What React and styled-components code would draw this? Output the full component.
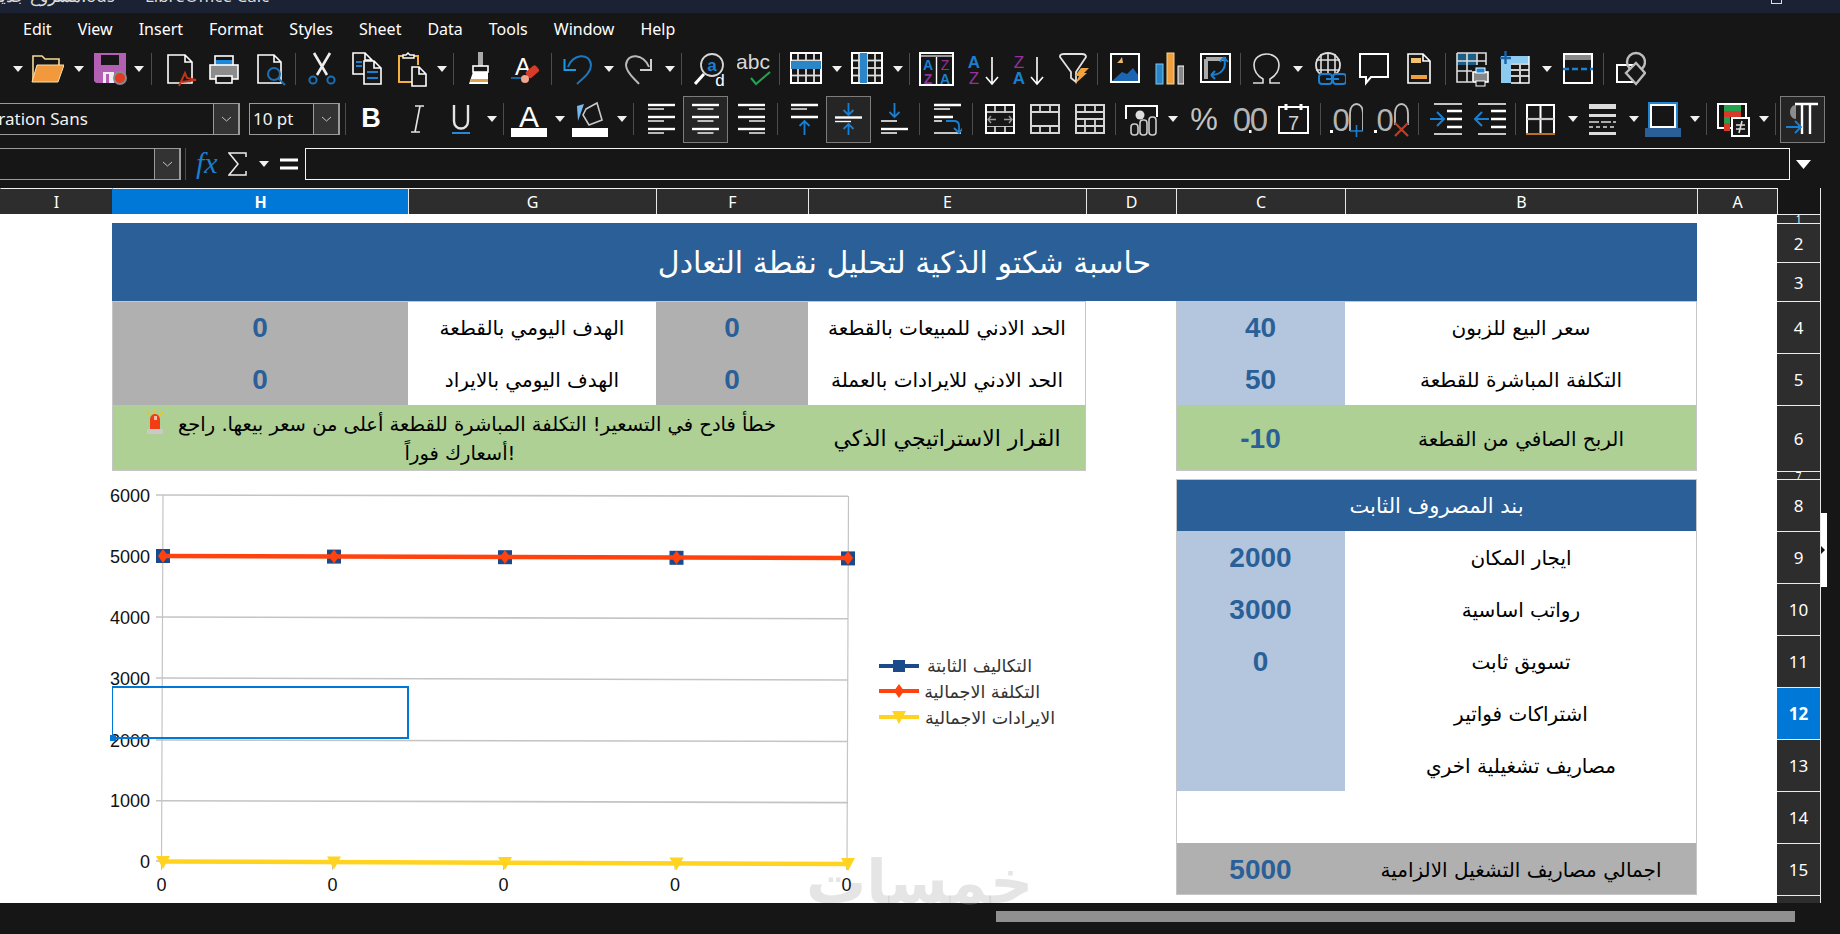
import React from 'react';
import styled, { createGlobalStyle } from 'styled-components';

const BLUE = '#2a5f98';
const ICON = '#1a7fd0';
const UI_FONT = '"Noto Sans", "Open Sans", sans-serif';
const AR_FONT = '"DejaVu Sans", sans-serif';

const Global = createGlobalStyle`
    html, body { margin: 0; padding: 0; background: #161616; }
    * { box-sizing: border-box; }
`;

const Page = styled.div`
    position: relative;
    width: 1840px;
    height: 934px;
    overflow: hidden;
    background: #161616;
    display: flex;
    flex-direction: column;
    font-family: ${UI_FONT};
`;

const TitleBar = styled.div`
    height: 13px;
    flex: none;
    overflow: hidden;
    background: #1a2233;
    color: #dcdcdc;
    display: flex;
    justify-content: space-between;
    font-size: 17px;
    line-height: 22px;
`;

const TitleText = styled.div`
    margin-top: -15px;
    margin-left: -8px;
    white-space: nowrap;
    display: flex;
    gap: 30px;
`;

const WinBtn = styled.div`
    width: 11px;
    height: 4px;
    margin-right: 58px;
    border: 1px solid #ddd;
    border-top: none;
`;

const MenuBar = styled.div`
    height: 32px;
    flex: none;
    display: flex;
    align-items: center;
    gap: 26px;
    padding-left: 23px;
    color: #fff;
    font-size: 16px;
`;

const Toolbar = styled.div`
    height: ${p => p.$h}px;
    flex: none;
    display: flex;
    align-items: center;
`;

const Tool = styled.div`
    flex: none;
    margin-left: ${p => p.$gap}px;
    width: ${p => p.$w}px;
    display: flex;
    justify-content: center;
    align-items: center;
    ${p => p.$on && `
        height: 47px;
        background: #252525;
        border: 1px solid #7c7c7c;
    `}
`;

const Sep = styled.div`
    width: 1px;
    height: 32px;
    background: #4c4c4c;
`;

const Caret = styled.div`
    width: 0;
    height: 0;
    border-left: 5px solid transparent;
    border-right: 5px solid transparent;
    border-top: 6px solid #f0f0f0;
`;

const Combo = styled.div`
    height: 32px;
    display: flex;
    width: 100%;
    border: 1px solid #9a9a9a;
    ${p => p.$noLeft && 'border-left: none;'}
    color: #f2f2f2;
    font-size: 17px;
    line-height: 30px;
    overflow: hidden;
`;

const ComboText = styled.div`
    flex: 1;
    min-width: 0;
    white-space: nowrap;
    padding-left: 3px;
    margin-left: ${p => p.$shift || 0}px;
`;

const ComboBtn = styled.div`
    flex: none;
    width: 26px;
    background: #333;
    border-left: 1px solid #9a9a9a;
    border-right: 1px solid #9a9a9a;
    display: flex;
    align-items: center;
    justify-content: center;
`;

const FormulaBar = styled.div`
    height: 43px;
    flex: none;
    display: flex;
    align-items: flex-start;
    padding-top: 3px;
`;

const FormulaField = styled.div`
    width: 1485px;
    height: 32px;
    margin-left: 7px;
    border: 1.5px solid #f4f4f4;
`;

const FormulaTool = styled.div`
    flex: none;
    height: 32px;
    display: flex;
    align-items: center;
    justify-content: center;
    margin-left: ${p => p.$gap}px;
    width: ${p => p.$w}px;
`;

const Body = styled.div`
    flex: none;
    display: flex;
    height: 715px;
`;

const Sheet = styled.div`
    width: 1820px;
    flex: none;
    background: #fff;
    display: grid;
    grid-template-columns: 112px 296px 248px 152px 278px 90px 169px 352px 80px 43px;
    grid-template-rows: 26px 9px 39px 39px 52px 52px 66px 8px repeat(8, 52px) 8px;
`;

const Rail = styled.div`
    position: relative;
    flex: 1;
    border-left: 1px solid #e8e8e8;
`;

const RailHandle = styled.div`
    position: absolute;
    left: 0;
    top: 325px;
    width: 6px;
    height: 74px;
    background: #fff;
    display: flex;
    align-items: center;
    &::after {
        content: '';
        border-left: 4px solid #111;
        border-top: 4px solid transparent;
        border-bottom: 4px solid transparent;
    }
`;

const ColHead = styled.div`
    background: ${p => (p.$on ? '#0078d7' : '#2d2d2d')};
    color: #fff;
    font-weight: ${p => (p.$on ? 700 : 400)};
    font-size: 16px;
    display: flex;
    align-items: center;
    justify-content: center;
    border-top: 1px solid #f2f2f2;
    border-left: 1px solid ${p => (p.$on || p.$first ? 'transparent' : '#e6e6e6')};
`;

const Corner = styled.div`
    background: #161616;
    border-left: 1px solid #e6e6e6;
`;

const RowHead = styled.div`
    grid-column: 10;
    background: ${p => (p.$on ? '#0078d7' : '#2d2d2d')};
    color: #fff;
    font-weight: ${p => (p.$on ? 700 : 400)};
    font-size: ${p => (p.$small ? 10 : 17)}px;
    line-height: 1;
    overflow: hidden;
    display: flex;
    align-items: center;
    justify-content: center;
    border-top: 1px solid #ececec;
`;

const Cell = styled.div`
    grid-column: ${p => p.$c};
    grid-row: ${p => p.$r};
    background: ${p => p.$bg || 'transparent'};
    display: flex;
    align-items: center;
    justify-content: center;
    min-width: 0;
`;

const Label = styled(Cell).attrs({ dir: 'rtl' })`
    font-family: ${AR_FONT};
    font-size: ${p => p.$size || 20}px;
    color: ${p => p.$color || '#000'};
    white-space: nowrap;
    padding-top: 1px;
`;

const Value = styled(Cell)`
    font-family: "Liberation Sans", Arial, sans-serif;
    font-weight: 700;
    font-size: 28px;
    color: ${BLUE};
    padding-top: 2px;
`;

const Notice = styled(Cell)`
    font-family: ${AR_FONT};
    font-size: 19.5px;
    line-height: 29px;
    color: #000;
    text-align: center;
    white-space: nowrap;
`;

const Frame = styled.div`
    grid-column: ${p => p.$c};
    grid-row: ${p => p.$r};
    border: 1px solid #c6c6c6;
    pointer-events: none;
    z-index: 1;
`;

const ChartArea = styled.svg`
    grid-column: 1 / 6;
    grid-row: 8 / 18;
    width: 1086px;
    height: 432px;
    z-index: 2;
    text {
        font-family: "Liberation Sans", Arial, sans-serif;
        font-size: 18px;
        fill: #111;
    }
    text.legend {
        font-family: ${AR_FONT};
        font-size: 17.5px;
        fill: #333;
    }
`;

const Selection = styled.div`
    grid-column: 2;
    grid-row: 13;
    position: relative;
    margin: -1px -1px 0 0;
    border: 2px solid #0078d7;
    border-width: 2px 2px 2px 1px;
    z-index: 3;
    &::after {
        content: '';
        position: absolute;
        left: -3px;
        bottom: -4px;
        width: 6px;
        height: 6px;
        background: #0078d7;
    }
`;

const Footer = styled.div`
    flex: 1;
    padding: 8px 45px 0 996px;
`;

const Thumb = styled.div`
    height: 11px;
    background: #909090;
`;

const Watermark = styled.div.attrs({ dir: 'rtl' })`
    position: absolute;
    left: 806px;
    top: 842px;
    font-family: ${AR_FONT};
    font-size: 60px;
    font-weight: 700;
    line-height: 80px;
    color: rgba(170, 170, 170, 0.3);
    z-index: 5;
`;

// every toolbar icon is drawn in a 36px tall box, coordinates in screen pixels
const S = ({ w, children }) => (
    <svg width={w} height={36} viewBox={`0 0 ${w} 36`} fill="none">{children}</svg>
);
const T = ({ x, y, size = 15, fill = '#fff', weight = 400, children }) => (
    <text x={x} y={y} fontSize={size} fontWeight={weight} fill={fill} fontFamily='"Liberation Sans", sans-serif' textAnchor="middle">{children}</text>
);

const Doc = ({ x = 1, y = 4, w = 24, h = 28, c = '#fff' }) => (
    <path d={`M${x} ${y}H${x + w - 7}L${x + w} ${y + 7}V${y + h}H${x}ZM${x + w - 7} ${y}V${y + 7}H${x + w}`} stroke={c} strokeWidth="1.6" fill="#171717" />
);

const GridIcon = ({ w = 32, h = 30, y = 2, cols = 4, rows = 4, c = '#ddd', children }) => {
    const lines = [];
    for (let i = 1; i < cols; i++) lines.push(<path key={'c' + i} d={`M${(w * i) / cols} ${y}V${y + h}`} stroke={c} strokeWidth="1.8" />);
    for (let i = 1; i < rows; i++) lines.push(<path key={'r' + i} d={`M1 ${y + (h * i) / rows}H${w - 1}`} stroke={c} strokeWidth="1.8" />);
    return (
        <S w={w}>
            {lines}
            <rect x="1" y={y} width={w - 2} height={h} stroke="#fff" strokeWidth="2" />
            {children}
        </S>
    );
};

const Folder = () => (
    <S w={33}>
        <path d="M2 30V5H11L14 8H28V15" stroke="#f7d994" strokeWidth="1.6" />
        <path d="M1 31L6 14H33L27 31Z" fill="#f2993d" stroke="#fbe3a8" />
    </S>
);
const Save = () => (
    <S w={34}>
        <path d="M1 2H33V24L26 32H3L1 30Z" fill="#b25fb4" />
        <rect x="8" y="4" width="18" height="10" fill="#171717" />
        <rect x="10" y="21" width="11" height="11" fill="#eee" />
        <rect x="13" y="23" width="3" height="9" fill="#b25fb4" />
        <circle cx="27" cy="27" r="6" fill="#e13b26" stroke="#8a8a8a" strokeWidth="2" />
    </S>
);
const Pdf = () => (
    <S w={30}>
        <Doc x={1} y={4} w={24} h={28} />
        <path d="M12 35L18 22L20 27L29 29L15 31" stroke="#c0341a" strokeWidth="2" />
    </S>
);
const Printer = () => (
    <S w={30}>
        <rect x="6" y="5" width="18" height="9" stroke="#fff" strokeWidth="1.6" />
        <rect x="7" y="9" width="16" height="5" fill="#1e88d8" />
        <rect x="1" y="14" width="28" height="14" fill="#8c8c8c" stroke="#fff" strokeWidth="1.6" />
        <rect x="7" y="25" width="16" height="7" fill="#171717" stroke="#fff" strokeWidth="1.6" />
    </S>
);
const Preview = () => (
    <S w={29}>
        <Doc x={1} y={4} w={23} h={28} />
        <circle cx="17" cy="23" r="6" stroke="#1a6fb5" strokeWidth="2" fill="#171717" />
        <path d="M21 27L28 34" stroke="#1a6fb5" strokeWidth="2" />
    </S>
);
const Cut = () => (
    <S w={28}>
        <path d="M6 2L19 24M22 2L9 24" stroke="#eee" strokeWidth="2.6" />
        <circle cx="5" cy="29" r="3.6" stroke="#1a6fb5" strokeWidth="2" />
        <circle cx="23" cy="29" r="3.6" stroke="#1a6fb5" strokeWidth="2" />
    </S>
);
const Copy = () => (
    <S w={30}>
        <Doc x={1} y={2} w={19} h={21} />
        <Doc x={12} y={10} w={17} h={23} />
        <path d="M4 11H10M4 15H10M15 21H26M15 27H26" stroke={ICON} strokeWidth="1.8" />
    </S>
);
const Paste = () => (
    <S w={29}>
        <path d="M5 5H1V31H14M16 5H20V14" stroke="#f5b042" strokeWidth="2" />
        <path d="M5 7V4H8L10 2L12 4H16V7Z" stroke="#fff" strokeWidth="1.4" />
        <Doc x={14} y={16} w={14} h={19} />
    </S>
);
const Brush = () => (
    <S w={22}>
        <rect x="9" y="1" width="5" height="14" fill="#a9a9a9" />
        <rect x="4" y="15" width="15" height="6" fill="#171717" stroke="#fff" strokeWidth="1.6" />
        <path d="M4 21H19V33H0Z" fill="#fff" />
        <path d="M2 28H19V31H1Z" fill="#e0a24a" />
    </S>
);
const ClearFmt = () => (
    <S w={29}>
        <T x={12} y={24} size={24}>A</T>
        <path d="M0 27H14" stroke={ICON} strokeWidth="1.4" />
        <rect x="15" y="17" width="13" height="8" rx="2" transform="rotate(-40 21 21)" fill="#d63c28" />
        <circle cx="14" cy="28" r="4" fill="#efa58d" />
    </S>
);
const Undo = () => (
    <S w={29}>
        <path d="M5 16C9 3 27 1 28 14C28 22 19 28 14 33" stroke="#1a78c2" strokeWidth="2" />
        <path d="M1.5 8V19H13" stroke="#1a9ae0" strokeWidth="2" />
    </S>
);
const Redo = () => (
    <S w={27}>
        <path d="M24 16C19 3 2 1 1 14C1 22 10 28 14 33" stroke="#b9b9b9" strokeWidth="2" />
        <path d="M26 8V19H15" stroke="#cfcfcf" strokeWidth="2" />
    </S>
);
const FindIcon = () => (
    <S w={32}>
        <circle cx="18" cy="14" r="11" stroke="#d6d6d6" strokeWidth="1.8" />
        <path d="M10 23L1 33" stroke="#fff" strokeWidth="3" />
        <T x={18} y={20} size={17} fill={ICON} weight={700}>a</T>
        <T x={26} y={35} size={17}>d</T>
    </S>
);
const Spell = () => (
    <S w={34}>
        <T x={16} y={18} size={21} fill="#d8d8d8">abc</T>
        <path d="M14 27L19 33L33 21" stroke="#23a14f" strokeWidth="2.2" />
    </S>
);
const RowGrid = () => (
    <GridIcon>
        <rect x="1" y="10" width="30" height="8" fill="#2a86c6" />
    </GridIcon>
);
const ColGrid = () => (
    <GridIcon>
        <rect x="9" y="2" width="7" height="30" fill="#2a86c6" />
    </GridIcon>
);
const SortBox = () => (
    <S w={35}>
        <rect x="1" y="2" width="33" height="32" stroke="#fff" strokeWidth="2" />
        <path d="M2 5H33" stroke="#999" strokeWidth="2" />
        <path d="M17.500 6V34" stroke="#fff" strokeWidth="1.4" />
        <T x={9} y={19} size={14} fill={ICON} weight={700}>A</T>
        <T x={9} y={33} size={14} fill="#94329a" weight={700}>Z</T>
        <T x={26} y={19} size={14} fill="#94329a">Z</T>
        <T x={26} y={33} size={14} fill={ICON} weight={700}>A</T>
    </S>
);
const Arrow = ({ x }) => <path d={`M${x} 6V33M${x - 6} 26L${x} 33L${x + 6} 26`} stroke="#fff" strokeWidth="1.6" />;
const SortAZ = ({ flip }) => (
    <S w={33}>
        <T x={7} y={17} size={17} fill={flip ? '#94329a' : ICON} weight={flip ? 400 : 700}>{flip ? 'Z' : 'A'}</T>
        <T x={7} y={33} size={17} fill={flip ? ICON : '#94329a'} weight={flip ? 700 : 400}>{flip ? 'A' : 'Z'}</T>
        <Arrow x={25} />
    </S>
);
const Filter = () => (
    <S w={30}>
        <path d="M1 5Q1 3 5 3H23Q27 3 27 6L17 21V31L12 27V21L1 6Z" stroke="#e2e2e2" strokeWidth="1.8" />
        <path d="M22 17H30L25 22H28L16 33L20 25H16Z" fill="#f0a33c" />
    </S>
);
const ImageIcon = () => (
    <S w={30}>
        <rect x="1" y="3" width="28" height="28" stroke="#fff" strokeWidth="2" />
        <path d="M2 30L12 21L17 23L23 17L28 24V30Z" fill="#1a66b5" />
        <path d="M7 12L10 9L12 6L13 12Z" fill="#e9bb6f" />
    </S>
);
const BarChart = () => (
    <S w={29}>
        <rect x="1" y="13" width="7" height="20" fill="#2a86c6" stroke="#7fc4ef" />
        <rect x="12" y="2" width="7" height="31" fill="#ef9f3e" stroke="#f8d793" />
        <rect x="23" y="15" width="6" height="18" fill="#888" stroke="#fff" />
    </S>
);
const Pivot = () => (
    <S w={31}>
        <rect x="1" y="3" width="29" height="28" stroke="#fff" strokeWidth="2" />
        <path d="M6 8H26M6 8V28" stroke="#aaa" strokeWidth="4" />
        <path d="M24 8C27 16 22 24 11 24M24 6L20 11M24 6L28 11M11 24L15 20M11 24L15 28" stroke={ICON} strokeWidth="2" />
    </S>
);
const Omega = () => (
    <S w={29}>
        <path d="M1 32H11V28C4 24 2 18 2 14C2 7 8 3 14.500 3C21 3 27 7 27 14C27 18 25 24 18 28V32H28" stroke="#ddd" strokeWidth="1.6" />
    </S>
);
const Link = () => (
    <S w={32}>
        <circle cx="14" cy="14" r="12" stroke="#ddd" strokeWidth="1.8" />
        <path d="M14 2V26M7 3V25M21 3V25M2 9H26M2 19H26" stroke="#ddd" strokeWidth="1.6" />
        <rect x="5" y="23" width="13" height="10" rx="3" fill="#171717" stroke={ICON} strokeWidth="2" />
        <rect x="19" y="23" width="13" height="10" rx="3" fill="#171717" stroke={ICON} strokeWidth="2" />
        <path d="M12 28H25" stroke={ICON} strokeWidth="2" />
    </S>
);
const Comment = () => (
    <S w={30}>
        <path d="M1 3H29V26H12L7 32V26H1Z" stroke="#fff" strokeWidth="2" />
    </S>
);
const HeaderDoc = () => (
    <S w={24}>
        <Doc x={1} y={3} w={22} h={29} />
        <rect x="4" y="7" width="10" height="5" fill="#f2c36e" />
        <rect x="4" y="24" width="16" height="4" fill="#ef9f3e" />
    </S>
);
const PrintArea = () => (
    <S w={33}>
        <rect x="1" y="2" width="20" height="12" fill="#1d5e86" />
        <path d="M1 2H30V14M1 2V31H16M11 2V31M21 2V14M1 10H30M1 20H16" stroke="#ddd" strokeWidth="1.6" />
        <rect x="17" y="21" width="15" height="10" fill="#888" stroke="#fff" strokeWidth="1.6" />
        <rect x="20" y="17" width="9" height="5" fill="#1e88d8" stroke="#fff" />
        <rect x="20" y="30" width="9" height="5" fill="#171717" stroke="#fff" />
    </S>
);
const Freeze = () => (
    <S w={30}>
        <path d="M1 5H29V32H1Z" fill="#8dcaf0" />
        <rect x="11" y="13" width="18" height="19" fill="#171717" />
        <path d="M11 13H29M11 19H29M11 25H29M20 13V32" stroke="#ccc" strokeWidth="2" />
        <path d="M5.500 0V13M0 7H11" stroke="#1763a8" strokeWidth="2.4" />
        <path d="M29 5V32H11" stroke="#fff" strokeWidth="1.4" />
    </S>
);
const SplitWin = () => (
    <S w={30}>
        <rect x="1" y="3" width="28" height="29" stroke="#fff" strokeWidth="2" />
        <rect x="2" y="4" width="26" height="5" fill="#8a8a8a" />
        <path d="M0 18H30" stroke={ICON} strokeWidth="2.4" strokeDasharray="6 3" />
    </S>
);
const Shapes = () => (
    <S w={30}>
        <rect x="1" y="14" width="19" height="17" stroke="#fff" strokeWidth="2" fill="#171717" />
        <circle cx="20" cy="11" r="9" stroke="#bdbdbd" strokeWidth="2.4" />
        <path d="M20 12L29 22L20 33L10 22Z" stroke="#bdbdbd" strokeWidth="2.4" fill="#171717" />
    </S>
);

const AlignLines = ({ shorts }) => (
    <S w={27}>
        {[4, 16, 28].map((y, i) => <path key={y} d={`M0 ${y}H27`} stroke="#fff" strokeWidth="2.4" />)}
        {[8, 20, 32].map(y => <path key={y} d={`M${shorts} ${y}H${shorts + 16}`} stroke="#fff" strokeWidth="1.4" />)}
    </S>
);
const up = (x, top, bot) => <path d={`M${x} ${bot}V${top}M${x - 5} ${top + 5}L${x} ${top}L${x + 5} ${top + 5}`} stroke={ICON} strokeWidth="1.8" />;
const down = (x, top, bot) => <path d={`M${x} ${top}V${bot}M${x - 5} ${bot - 5}L${x} ${bot}L${x + 5} ${bot - 5}`} stroke={ICON} strokeWidth="1.8" />;
const VTop = () => (
    <S w={27}>
        <path d="M0 4H27M0 16H27" stroke="#fff" strokeWidth="2.4" />
        <path d="M0 8H16" stroke="#fff" strokeWidth="1.4" />
        {up(13.5, 20, 34)}
    </S>
);
const VMid = () => (
    <S w={27}>
        <path d="M0 16.500H27" stroke="#fff" strokeWidth="2.4" />
        <path d="M0 20.500H16" stroke="#fff" strokeWidth="1.4" />
        {down(13.5, 2, 14)}
        {up(13.5, 23, 34)}
    </S>
);
const VBot = () => (
    <S w={27}>
        <path d="M0 28H27" stroke="#fff" strokeWidth="2.4" />
        <path d="M0 20H16M0 32H16" stroke="#fff" strokeWidth="1.4" />
        {down(13.5, 2, 16)}
    </S>
);
const Wrap = () => (
    <S w={28}>
        <path d="M0 4H27M0 16H19" stroke="#fff" strokeWidth="2.4" />
        <path d="M0 8H16M0 20H8M0 32H27" stroke="#fff" strokeWidth="1.4" />
        <path d="M12 20H20Q25 20 25 25V31M20 27L25 32L29 27" stroke={ICON} strokeWidth="1.8" />
    </S>
);
const MergeIcon = () => (
    <GridIcon w={30} h={28} y={4} cols={3} rows={4} c="#cfcfcf">
        <rect x="2" y="12" width="26" height="13" fill="#171717" />
        <path d="M4 18.500H11M19 18.500H26M6 15L3 18.500L6 22M24 15L27 18.500L24 22" stroke="#9a9a9a" strokeWidth="1.4" />
    </GridIcon>
);
const SplitGrid = () => (
    <S w={30}>
        <rect x="1" y="4" width="28" height="28" stroke="#d6d6d6" strokeWidth="2" />
        <path d="M1 11H29M1 25H29M10 4V11M20 4V11M10 25V32M20 25V32" stroke="#d6d6d6" strokeWidth="1.8" />
    </S>
);
const BrickGrid = () => (
    <S w={30}>
        <rect x="1" y="4" width="28" height="28" stroke="#d6d6d6" strokeWidth="2" />
        <path d="M1 11H29M1 18H29M1 25H29M10 4V11M20 4V11M10 18V32M20 18V32" stroke="#d6d6d6" strokeWidth="1.8" />
    </S>
);
const Currency = () => (
    <S w={33}>
        <path d="M1 18V5H32V16" stroke="#fff" strokeWidth="2" />
        <circle cx="15" cy="14" r="4.500" fill="#ddd" />
        <rect x="6" y="23" width="7" height="11" rx="3" fill="#171717" stroke="#ccc" strokeWidth="1.6" />
        <rect x="15" y="19" width="7" height="15" rx="3" fill="#171717" stroke="#ccc" strokeWidth="1.6" />
        <rect x="24" y="16" width="7" height="18" rx="3" fill="#171717" stroke="#ccc" strokeWidth="1.6" />
    </S>
);
const Percent = () => <S w={26}><T x={13} y={29} size={31} fill="#c4c4c4">%</T></S>;
const Zeros = () => (
    <S w={34}>
        <T x={9} y={30} size={33} fill="#b4b4b4">0</T>
        <T x={26} y={30} size={33} fill="#b4b4b4">0</T>
        <rect x="16" y="29" width="2.500" height="3" fill="#fff" />
    </S>
);
const Calendar = () => (
    <S w={31}>
        <rect x="1" y="6" width="29" height="26" stroke="#fff" strokeWidth="2" />
        <path d="M8 3V9M23 3V9" stroke="#fff" strokeWidth="3" />
        <T x={15.5} y={29} size={20} fill="#d0d0d0">7</T>
    </S>
);
const AddDec = () => (
    <S w={33}>
        <rect x="0" y="29" width="3" height="3" fill="#fff" />
        <T x={11} y={30} size={31} fill="#b4b4b4">0</T>
        <path d="M20 30V12C20 0 33 0 33 12V30" stroke="#c0c0c0" strokeWidth="1.800" />
        <path d="M26.500 24V36M20 30H33" stroke={ICON} strokeWidth="1.600" />
    </S>
);
const DelDec = () => (
    <S w={35}>
        <rect x="0" y="29" width="3" height="3" fill="#fff" />
        <T x={11} y={30} size={31} fill="#b4b4b4">0</T>
        <path d="M21 24V12C21 0 34 0 34 12V24" stroke="#c0c0c0" strokeWidth="1.800" />
        <path d="M21 22L34 35M34 22L21 35" stroke="#cc3a1c" strokeWidth="2.200" />
    </S>
);
const Indent = ({ back }) => (
    <S w={33}>
        <path d="M4 3H32M4 33H32" stroke="#fff" strokeWidth="1.600" />
        <path d="M17 10H32M17 18H32M17 26H32" stroke="#fff" strokeWidth="2.400" />
        {back
            ? <path d="M15 18H1M8 11L1 18L8 25" stroke={ICON} strokeWidth="2" />
            : <path d="M0 18H14M7 11L14 18L7 25" stroke={ICON} strokeWidth="2" />}
    </S>
);
const Borders = () => (
    <S w={29}>
        <path d="M1 32V4H28V32M14.500 4V32" stroke="#fff" strokeWidth="2" />
        <path d="M1 18H28" stroke="#c8c8c8" strokeWidth="2.200" />
        <path d="M0 33H29" stroke="#e08a2e" strokeWidth="1.600" />
    </S>
);
const BorderStyle = () => (
    <S w={27}>
        <rect x="0" y="3" width="27" height="5" fill="#dcdcdc" />
        <rect x="0" y="13" width="27" height="3" fill="#dcdcdc" />
        <path d="M0 21H27" stroke="#ddd" strokeWidth="1.400" strokeDasharray="10 2" />
        <path d="M0 26H27" stroke="#ddd" strokeWidth="1.400" strokeDasharray="4 3" />
        <rect x="0" y="31" width="27" height="3" fill="#dcdcdc" />
    </S>
);
const BorderColor = () => (
    <S w={36}>
        <rect x="4" y="2" width="28" height="26" stroke="#1f84d2" strokeWidth="2" />
        <rect x="6" y="4" width="24" height="22" stroke="#fff" strokeWidth="2" />
        <rect x="0" y="27" width="36" height="9" fill={BLUE} />
    </S>
);
const CondFmt = () => (
    <S w={33}>
        <rect x="1" y="3" width="28" height="24" stroke="#fff" strokeWidth="2" />
        <rect x="7" y="4" width="17" height="6" fill="#24a04f" />
        <rect x="7" y="10" width="17" height="6" fill="#d63a28" />
        <rect x="7" y="16" width="6" height="6" fill="#24a04f" />
        <rect x="7" y="22" width="6" height="8" fill="#d63a28" />
        <rect x="15" y="17" width="17" height="18" fill="#171717" stroke="#fff" strokeWidth="2" />
        <path d="M19 24H28M19 28H28M25 20L22 32" stroke="#ddd" strokeWidth="1.600" />
    </S>
);
const Rtl = () => (
    <S w={33}>
        <path d="M10 4C2 4 2 18 10 18Z" fill="#8c8c8c" />
        <path d="M9 3H32M16 3V33M24 3V33" stroke="#fff" strokeWidth="2.400" />
        <path d="M0 26H15M9 20L15 26L9 32" stroke={ICON} strokeWidth="1.800" />
    </S>
);

const Bold = () => <S w={20}><T x={10} y={26} size={27} weight={700}>B</T></S>;
const Italic = () => (
    <S w={14}>
        <path d="M5 5H14M1 31H10M10 5L5 31" stroke="#e4e4e4" strokeWidth="1.600" />
    </S>
);
const Under = () => (
    <S w={18}>
        <path d="M2 4V20C2 30 16 30 16 20V4" stroke="#e4e4e4" strokeWidth="2.400" />
        <path d="M0 32H18" stroke="#2a86d6" strokeWidth="2" />
    </S>
);
const FontColor = () => (
    <S w={36}>
        <T x={18} y={26} size={30}>A</T>
        <rect x="0" y="27" width="36" height="9" fill="#fff" />
    </S>
);
const Highlight = () => (
    <S w={36}>
        <path d="M5 5L12 3L6 20Z" fill="#75b9ee" />
        <path d="M14 8L25 2L30 19L17 24L11 14Z" stroke="#c8c8c8" strokeWidth="1.600" />
        <rect x="0" y="27" width="36" height="9" fill="#fff" />
    </S>
);
const Chevron = () => (
    <svg width="11" height="6" viewBox="0 0 11 6"><path d="M1 1L5.500 5L10 1" stroke="#c4c4c4" fill="none" /></svg>
);

const row1 = [
    [13, 22, <Caret />], [31, 64, <Folder />], [74, 83, <Caret />], [93, 127, <Save />], [134, 144, <Caret />],
    [151, 152, <Sep />], [167, 197, <Pdf />], [209, 239, <Printer />], [257, 286, <Preview />], [295, 296, <Sep />],
    [308, 336, <Cut />], [352, 382, <Copy />], [398, 427, <Paste />], [437, 446, <Caret />], [453, 454, <Sep />],
    [469, 491, <Brush />], [511, 540, <ClearFmt />], [551, 552, <Sep />], [563, 592, <Undo />], [604, 613, <Caret />],
    [625, 652, <Redo />], [665, 674, <Caret />], [681, 682, <Sep />], [694, 726, <FindIcon />], [737, 771, <Spell />],
    [779, 780, <Sep />], [790, 822, <RowGrid />], [832, 841, <Caret />], [851, 883, <ColGrid />], [893, 902, <Caret />],
    [909, 910, <Sep />], [919, 954, <SortBox />], [967, 1000, <SortAZ />], [1012, 1045, <SortAZ flip />], [1059, 1089, <Filter />],
    [1097, 1098, <Sep />], [1110, 1140, <ImageIcon />], [1155, 1184, <BarChart />], [1200, 1231, <Pivot />], [1240, 1241, <Sep />],
    [1252, 1281, <Omega />], [1293, 1302, <Caret />], [1314, 1346, <Link />], [1359, 1389, <Comment />], [1407, 1431, <HeaderDoc />],
    [1445, 1446, <Sep />], [1456, 1489, <PrintArea />], [1500, 1530, <Freeze />], [1542, 1551, <Caret />], [1563, 1593, <SplitWin />],
    [1603, 1604, <Sep />], [1616, 1646, <Shapes />],
];

const row2 = [
    [0, 240, <Combo $noLeft><ComboText $shift={-38}>Liberation Sans</ComboText><ComboBtn><Chevron /></ComboBtn></Combo>],
    [249, 340, <Combo><ComboText>10 pt</ComboText><ComboBtn><Chevron /></ComboBtn></Combo>],
    [345, 346, <Sep />], [361, 381, <Bold />], [410, 424, <Italic />], [452, 470, <Under />], [487, 497, <Caret />],
    [503, 504, <Sep />], [511, 547, <FontColor />], [555, 565, <Caret />], [572, 608, <Highlight />], [617, 627, <Caret />],
    [633, 634, <Sep />], [648, 675, <AlignLines shorts={0} />], [683, 728, <AlignLines shorts={5.5} />, true], [738, 765, <AlignLines shorts={11} />],
    [777, 778, <Sep />], [791, 818, <VTop />], [826, 871, <VMid />, true], [881, 908, <VBot />], [919, 920, <Sep />],
    [934, 962, <Wrap />], [972, 973, <Sep />], [985, 1015, <MergeIcon />], [1030, 1060, <SplitGrid />], [1075, 1105, <BrickGrid />],
    [1115, 1116, <Sep />], [1125, 1158, <Currency />], [1168, 1178, <Caret />], [1191, 1217, <Percent />], [1233, 1267, <Zeros />],
    [1278, 1309, <Calendar />], [1320, 1321, <Sep />], [1330, 1363, <AddDec />], [1374, 1409, <DelDec />], [1418, 1419, <Sep />],
    [1430, 1463, <Indent />], [1474, 1507, <Indent back />], [1515, 1516, <Sep />], [1526, 1555, <Borders />], [1568, 1578, <Caret />],
    [1589, 1616, <BorderStyle />], [1629, 1639, <Caret />], [1645, 1681, <BorderColor />], [1690, 1700, <Caret />], [1706, 1707, <Sep />],
    [1717, 1750, <CondFmt />], [1759, 1769, <Caret />], [1775, 1776, <Sep />], [1780, 1825, <Rtl />, true],
];

const ToolRow = ({ items, h }) => (
    <Toolbar $h={h}>
        {items.map((it, i) => (
            <Tool key={i} $gap={it[0] - (i ? items[i - 1][1] : 0)} $w={it[1] - it[0]} $on={it[3]}>{it[2]}</Tool>
        ))}
    </Toolbar>
);

const SirenIcon = styled.svg`
    vertical-align: -4px;
    margin-right: 12px;
`;

const Siren = () => (
    <SirenIcon width="22" height="26" viewBox="0 0 22 26">
        <path d="M6 20V11C6 3 16 3 16 11V20Z" fill="#f13c14" />
        <rect x="3" y="20" width="16" height="5" fill="#c9c9c9" />
        <path d="M11 1V4M3 3L6 6M19 3L16 6" stroke="#f2c21b" strokeWidth="1.500" />
        <rect x="10" y="7" width="3" height="4" fill="#ffb9a0" />
    </SirenIcon>
);

const gridLines = [[495, 496.3], [556, 558], [617, 618.7], [678, 680], [740, 741.5], [800.7, 802.6], [861, 863]];
const axisLabels = ['6000', '5000', '4000', '3000', '2000', '1000', '0'];
const pointsX = [163, 334, 505, 676.5, 848];

const Chart = () => (
    <ChartArea viewBox="0 0 1086 432">
        <g transform="translate(0,-471)">
            {gridLines.map(([a, b], i) => (
                <g key={i}>
                    <path d={`M156 ${a}L848 ${b}`} stroke="#c4c4c4" strokeWidth="1.600" />
                    <text x="150" y={a + 6.500} textAnchor="end">{axisLabels[i]}</text>
                </g>
            ))}
            <path d="M163 495L161.500 861M848.500 496L847 863" stroke="#c4c4c4" strokeWidth="1.200" />
            {pointsX.map((x, i) => (
                <g key={x}>
                    <rect x={x - 7} y={549 + i * 0.6} width="14" height="14" fill="#1a4a8a" />
                    <path d={`M${x - 1.500} 870V862`} stroke="#c4c4c4" />
                    <text x={x - 1.500} y="891" textAnchor="middle">0</text>
                </g>
            ))}
            <path d="M163 556L848 558" stroke="#ff420e" strokeWidth="4.500" />
            {pointsX.map((x, i) => (
                <path key={x} d={`M${x - 5} ${556 + i / 2}L${x} ${549 + i / 2}L${x + 5} ${556 + i / 2}L${x} ${563 + i / 2}Z`} fill="#ff420e" />
            ))}
            <path d="M163 861.500L848 864" stroke="#ffd320" strokeWidth="4.500" />
            {pointsX.map((x, i) => (
                <path key={x} d={`M${x - 7} ${856 + i / 2}H${x + 7}L${x} ${869 + i / 2}Z`} fill="#ffd320" />
            ))}
            <path d="M879 666H919" stroke="#1a4a8a" strokeWidth="4" />
            <rect x="893" y="660" width="12" height="12" fill="#1a4a8a" />
            <path d="M879 691H919" stroke="#ff420e" strokeWidth="4" />
            <path d="M894 691L899 684L904 691L899 698Z" fill="#ff420e" />
            <path d="M879 717H919" stroke="#ffd320" strokeWidth="4" />
            <path d="M892 711H906L899 724Z" fill="#ffd320" />
            <text className="legend" x="1032" y="672" direction="rtl">التكاليف الثابتة</text>
            <text className="legend" x="1040" y="698" direction="rtl">التكلفة الاجمالية</text>
            <text className="legend" x="1055" y="724" direction="rtl">الايرادات الاجمالية</text>
        </g>
    </ChartArea>
);

const FxIcon = () => (
    <svg width="26" height="32" viewBox="0 0 26 32">
        <text x="2" y="25" fontSize="30" fontStyle="italic" fontFamily='"Liberation Serif", serif' fill="#1a7fd0">fx</text>
    </svg>
);

const columns = ['I', 'H', 'G', 'F', 'E', 'D', 'C', 'B', 'A'];
const expenses = [
    ['ايجار المكان', '2000'],
    ['رواتب اساسية', '3000'],
    ['تسويق ثابت', '0'],
    ['اشتراكات فواتير', ''],
    ['مصاريف تشغيلية اخري', ''],
];

const App = () => (
    <Page>
        <Global />
        <TitleBar>
            <TitleText>
                <span>مشروع جديد.ods</span>
                <span>LibreOffice Calc</span>
            </TitleText>
            <WinBtn />
        </TitleBar>
        <MenuBar>
            {['Edit', 'View', 'Insert', 'Format', 'Styles', 'Sheet', 'Data', 'Tools', 'Window', 'Help'].map(m => <span key={m}>{m}</span>)}
        </MenuBar>
        <ToolRow items={row1} h={48} />
        <ToolRow items={row2} h={52} />
        <FormulaBar>
            <FormulaTool $gap={0} $w={181}>
                <Combo $noLeft><ComboText /><ComboBtn><Chevron /></ComboBtn></Combo>
            </FormulaTool>
            <FormulaTool $gap={4} $w={1}><Sep /></FormulaTool>
            <FormulaTool $gap={8} $w={26}><FxIcon /></FormulaTool>
            <FormulaTool $gap={8} $w={19}>
                <svg width="19" height="26" viewBox="0 0 19 26"><path d="M18 6V2H1L10 13L1 24H18V20" stroke="#eee" strokeWidth="1.500" fill="none" /></svg>
            </FormulaTool>
            <FormulaTool $gap={12} $w={9}><Caret /></FormulaTool>
            <FormulaTool $gap={12} $w={18}>
                <svg width="18" height="14" viewBox="0 0 18 14"><path d="M0 3H18M0 11H18" stroke="#fff" strokeWidth="3" /></svg>
            </FormulaTool>
            <FormulaField />
            <FormulaTool $gap={6} $w={15}>
                <svg width="15" height="9" viewBox="0 0 15 9"><path d="M0 0H15L7.500 9Z" fill="#fff" /></svg>
            </FormulaTool>
        </FormulaBar>
        <Body>
            <Sheet>
                {columns.map((c, i) => <ColHead key={c} $on={c === 'H'} $first={i === 0}>{c}</ColHead>)}
                <Corner />
                {Array.from({ length: 16 }, (_, i) => (
                    <RowHead key={i} style={{ gridRow: i + 2 }} $on={i === 11} $small={i === 0 || i === 6}>
                        {i === 15 ? '' : i + 1}
                    </RowHead>
                ))}

                <Label $c="2 / 9" $r="3 / 5" $bg={BLUE} $color="#fff" $size={30}>حاسبة شكتو الذكية لتحليل نقطة التعادل</Label>

                <Label $c={5} $r={5}>الحد الادني للمبيعات بالقطعة</Label>
                <Value $c={4} $r={5} $bg="#b0b0b0">0</Value>
                <Label $c={3} $r={5}>الهدف اليومي بالقطعة</Label>
                <Value $c={2} $r={5} $bg="#b0b0b0">0</Value>
                <Label $c={5} $r={6}>الحد الادني للايرادات بالعملة</Label>
                <Value $c={4} $r={6} $bg="#b0b0b0">0</Value>
                <Label $c={3} $r={6}>الهدف اليومي بالايراد</Label>
                <Value $c={2} $r={6} $bg="#b0b0b0">0</Value>
                <Label $c={5} $r={7} $bg="#aed094" $size={22}>القرار الاستراتيجي الذكي</Label>
                <Notice $c="2 / 5" $r={7} $bg="#aed094">
                    <div>
                        <Siren />خطأ فادح في التسعير! التكلفة المباشرة للقطعة أعلى من سعر بيعها. راجع<br />أسعارك فوراً!
                    </div>
                </Notice>
                <Frame $c="2 / 6" $r="5 / 8" />

                <Label $c={8} $r={5}>سعر البيع للزبون</Label>
                <Value $c={7} $r={5} $bg="#b3c6dd">40</Value>
                <Label $c={8} $r={6}>التكلفة المباشرة للقطعة</Label>
                <Value $c={7} $r={6} $bg="#b3c6dd">50</Value>
                <Label $c={8} $r={7} $bg="#aed094">الربح الصافي من القطعة</Label>
                <Value $c={7} $r={7} $bg="#aed094">-10</Value>
                <Frame $c="7 / 9" $r="5 / 8" />

                <Label $c="7 / 9" $r={9} $bg={BLUE} $color="#fff" $size={21}>بند المصروف الثابت</Label>
                {expenses.map(([name, val], i) => (
                    <React.Fragment key={name}>
                        <Label $c={8} $r={10 + i}>{name}</Label>
                        <Value $c={7} $r={10 + i} $bg="#b3c6dd">{val}</Value>
                    </React.Fragment>
                ))}
                <Label $c={8} $r={16} $bg="#b0b0b0">اجمالي مصاريف التشغيل الالزامية</Label>
                <Value $c={7} $r={16} $bg="#b0b0b0">5000</Value>
                <Frame $c="7 / 9" $r="9 / 17" />

                <Chart />
                <Selection />
            </Sheet>
            <Rail><RailHandle /></Rail>
        </Body>
        <Footer><Thumb /></Footer>
        <Watermark>خمسات</Watermark>
    </Page>
);

export default App;
